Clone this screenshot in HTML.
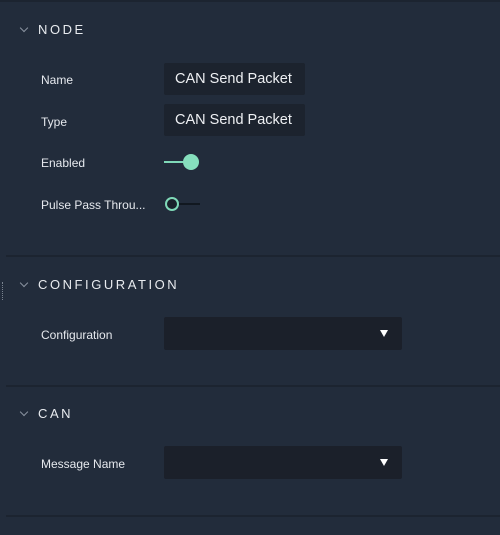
<!DOCTYPE html>
<html><head><style>
body{margin:0;width:500px;height:535px;background:#222c3b;font-family:"Liberation Sans",sans-serif;position:relative;overflow:hidden;color:#e6e9ee}
.a{position:absolute}
.h{position:absolute;left:38px;font-size:13px;letter-spacing:2.55px;color:#e8ebef}
.chev{position:absolute;left:21px;width:5px;height:5px;border-right:1.3px solid #8a93a0;border-bottom:1.3px solid #8a93a0;transform:rotate(45deg)}
.l{position:absolute;left:41px;font-size:12px;color:#e6e9ee}
.in{position:absolute;left:164px;width:141px;height:32px;background:#1c232e;border-radius:2px;font-size:14.5px;line-height:33px;padding-left:11px;box-sizing:border-box;color:#eef0f3}
.dd{position:absolute;left:164px;width:238px;height:33px;background:#1b202a;border-radius:2px}
.dd:after{content:"";position:absolute;left:216px;top:13px;border-left:4.5px solid transparent;border-right:4.5px solid transparent;border-top:7px solid #fff}
.div{position:absolute;left:6px;right:0;height:2px;background:#1c2430}
</style></head><body>
<div class="a" style="left:0;right:0;top:0;height:2px;background:#1c2430"></div>
<div class="chev" style="top:25px"></div><div class="h" style="top:22px">NODE</div>
<div class="l" style="top:73px">Name</div><div class="in" style="top:63px">CAN Send Packet</div>
<div class="l" style="top:115px">Type</div><div class="in" style="top:104px">CAN Send Packet</div>
<div class="l" style="top:156px">Enabled</div>
<div class="a" style="left:164px;top:161px;width:26px;height:2px;background:#7fd9b8"></div>
<div class="a" style="left:183px;top:154px;width:16px;height:16px;border-radius:50%;background:#86dfbd"></div>
<div class="l" style="top:198px">Pulse Pass Throu...</div>
<div class="a" style="left:172px;top:203px;width:28px;height:1.5px;background:#111820"></div>
<div class="a" style="left:165px;top:197px;width:10px;height:10px;border-radius:50%;border:2px solid #7fd9b8;background:#1a212b"></div>
<div class="div" style="top:255px"></div>
<div class="a" style="left:2px;top:282px;width:2px;height:18px;border-left:1.5px dotted #7a8390"></div>
<div class="chev" style="top:280px"></div><div class="h" style="top:277px">CONFIGURATION</div>
<div class="l" style="top:328px">Configuration</div><div class="dd" style="top:317px"></div>
<div class="div" style="top:385px"></div>
<div class="chev" style="top:409px"></div><div class="h" style="top:406px">CAN</div>
<div class="l" style="top:457px">Message Name</div><div class="dd" style="top:446px"></div>
<div class="div" style="top:515px"></div>
</body></html>
